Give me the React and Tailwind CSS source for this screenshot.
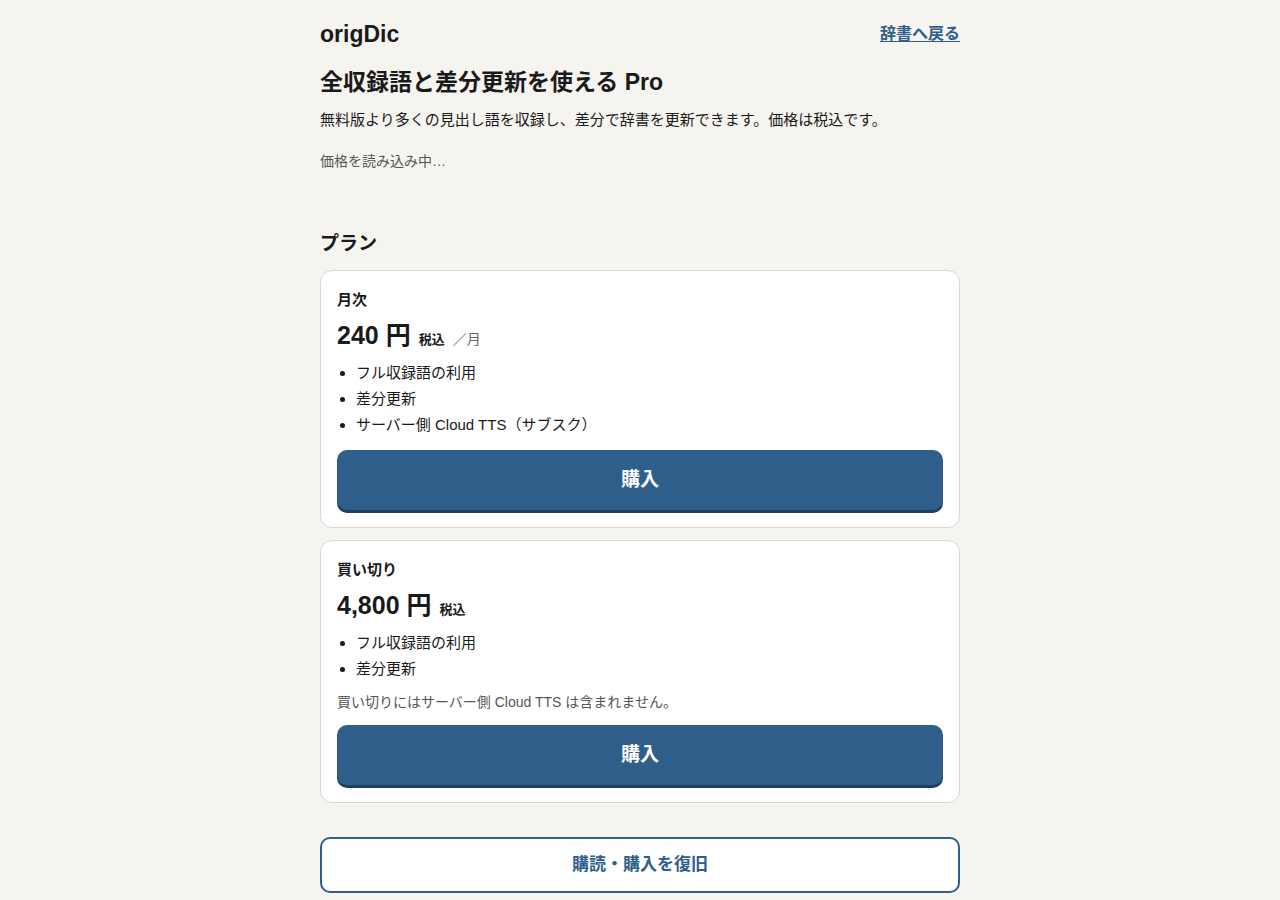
import React from 'react';

const font = { fontFamily: '"Liberation Sans", "Noto Sans CJK JP", sans-serif' };

function BuyButton() {
    return (
        <button className="mt-3 h-[60px] w-full rounded-[10px] bg-[#2f5e8b] text-[19px] font-bold text-white shadow-[0_3px_0_#1f3f60]">
            購入
        </button>
    );
}

function PlanCard({ title, price, suffix, features, note }) {
    return (
        <div className="rounded-[12px] border border-[#dcd7cc] bg-white px-4 pt-[17px] pb-[17px]">
            <h3 className="text-[15px] font-bold leading-6">{title}</h3>
            <div className="mt-[7px] flex items-baseline leading-8">
                <span className="text-[25px] font-bold">{price}</span>
                <span className="ml-2 text-[13px] font-bold">税込</span>
                {suffix && <span className="ml-2 text-[14px] text-[#666]">{suffix}</span>}
            </div>
            <ul className="mt-1 list-disc pl-[19px] text-[15px] leading-[26px]">
                {features.map((f) => (
                    <li key={f}>{f}</li>
                ))}
            </ul>
            {note && <p className="mt-[10px] mb-px text-[14px] leading-5 text-[#555]">{note}</p>}
            <BuyButton />
        </div>
    );
}

export default function App() {
    return (
        <div className="min-h-screen bg-[#f5f4ef] text-[#1a1a1a]" style={font}>
            <div className="mx-auto w-[640px] pt-[22px] pb-6">
                {/* Header */}
                <div className="flex h-6 items-center justify-between">
                    <span className="text-[23px] font-bold">origDic</span>
                    <a href="#" className="text-[16px] font-bold text-[#2f5e8b] underline underline-offset-2">
                        辞書へ戻る
                    </a>
                </div>

                <h1 className="mt-[21px] text-[23px] font-bold leading-[30px]">全収録語と差分更新を使える Pro</h1>
                <p className="mt-[11px] text-[15px] leading-6">
                    無料版より多くの見出し語を収録し、差分で辞書を更新できます。価格は税込です。
                </p>
                <p className="mt-[19px] text-[14px] leading-5 text-[#555]">価格を読み込み中…</p>

                {/* Plans */}
                <h2 className="mt-[60px] text-[19px] font-bold leading-[26px]">プラン</h2>
                <div className="mt-[13px] flex flex-col gap-3">
                    <PlanCard
                        title="月次"
                        price="240 円"
                        suffix="／月"
                        features={['フル収録語の利用', '差分更新', 'サーバー側 Cloud TTS（サブスク）']}
                    />
                    <PlanCard
                        title="買い切り"
                        price="4,800 円"
                        features={['フル収録語の利用', '差分更新']}
                        note="買い切りにはサーバー側 Cloud TTS は含まれません。"
                    />
                </div>

                <button className="mt-[34px] h-[56px] w-full rounded-[10px] border-2 border-[#2f5e8b] bg-white text-[17px] font-bold text-[#2f5e8b]">
                    購読・購入を復旧
                </button>
            </div>
        </div>
    );
}
